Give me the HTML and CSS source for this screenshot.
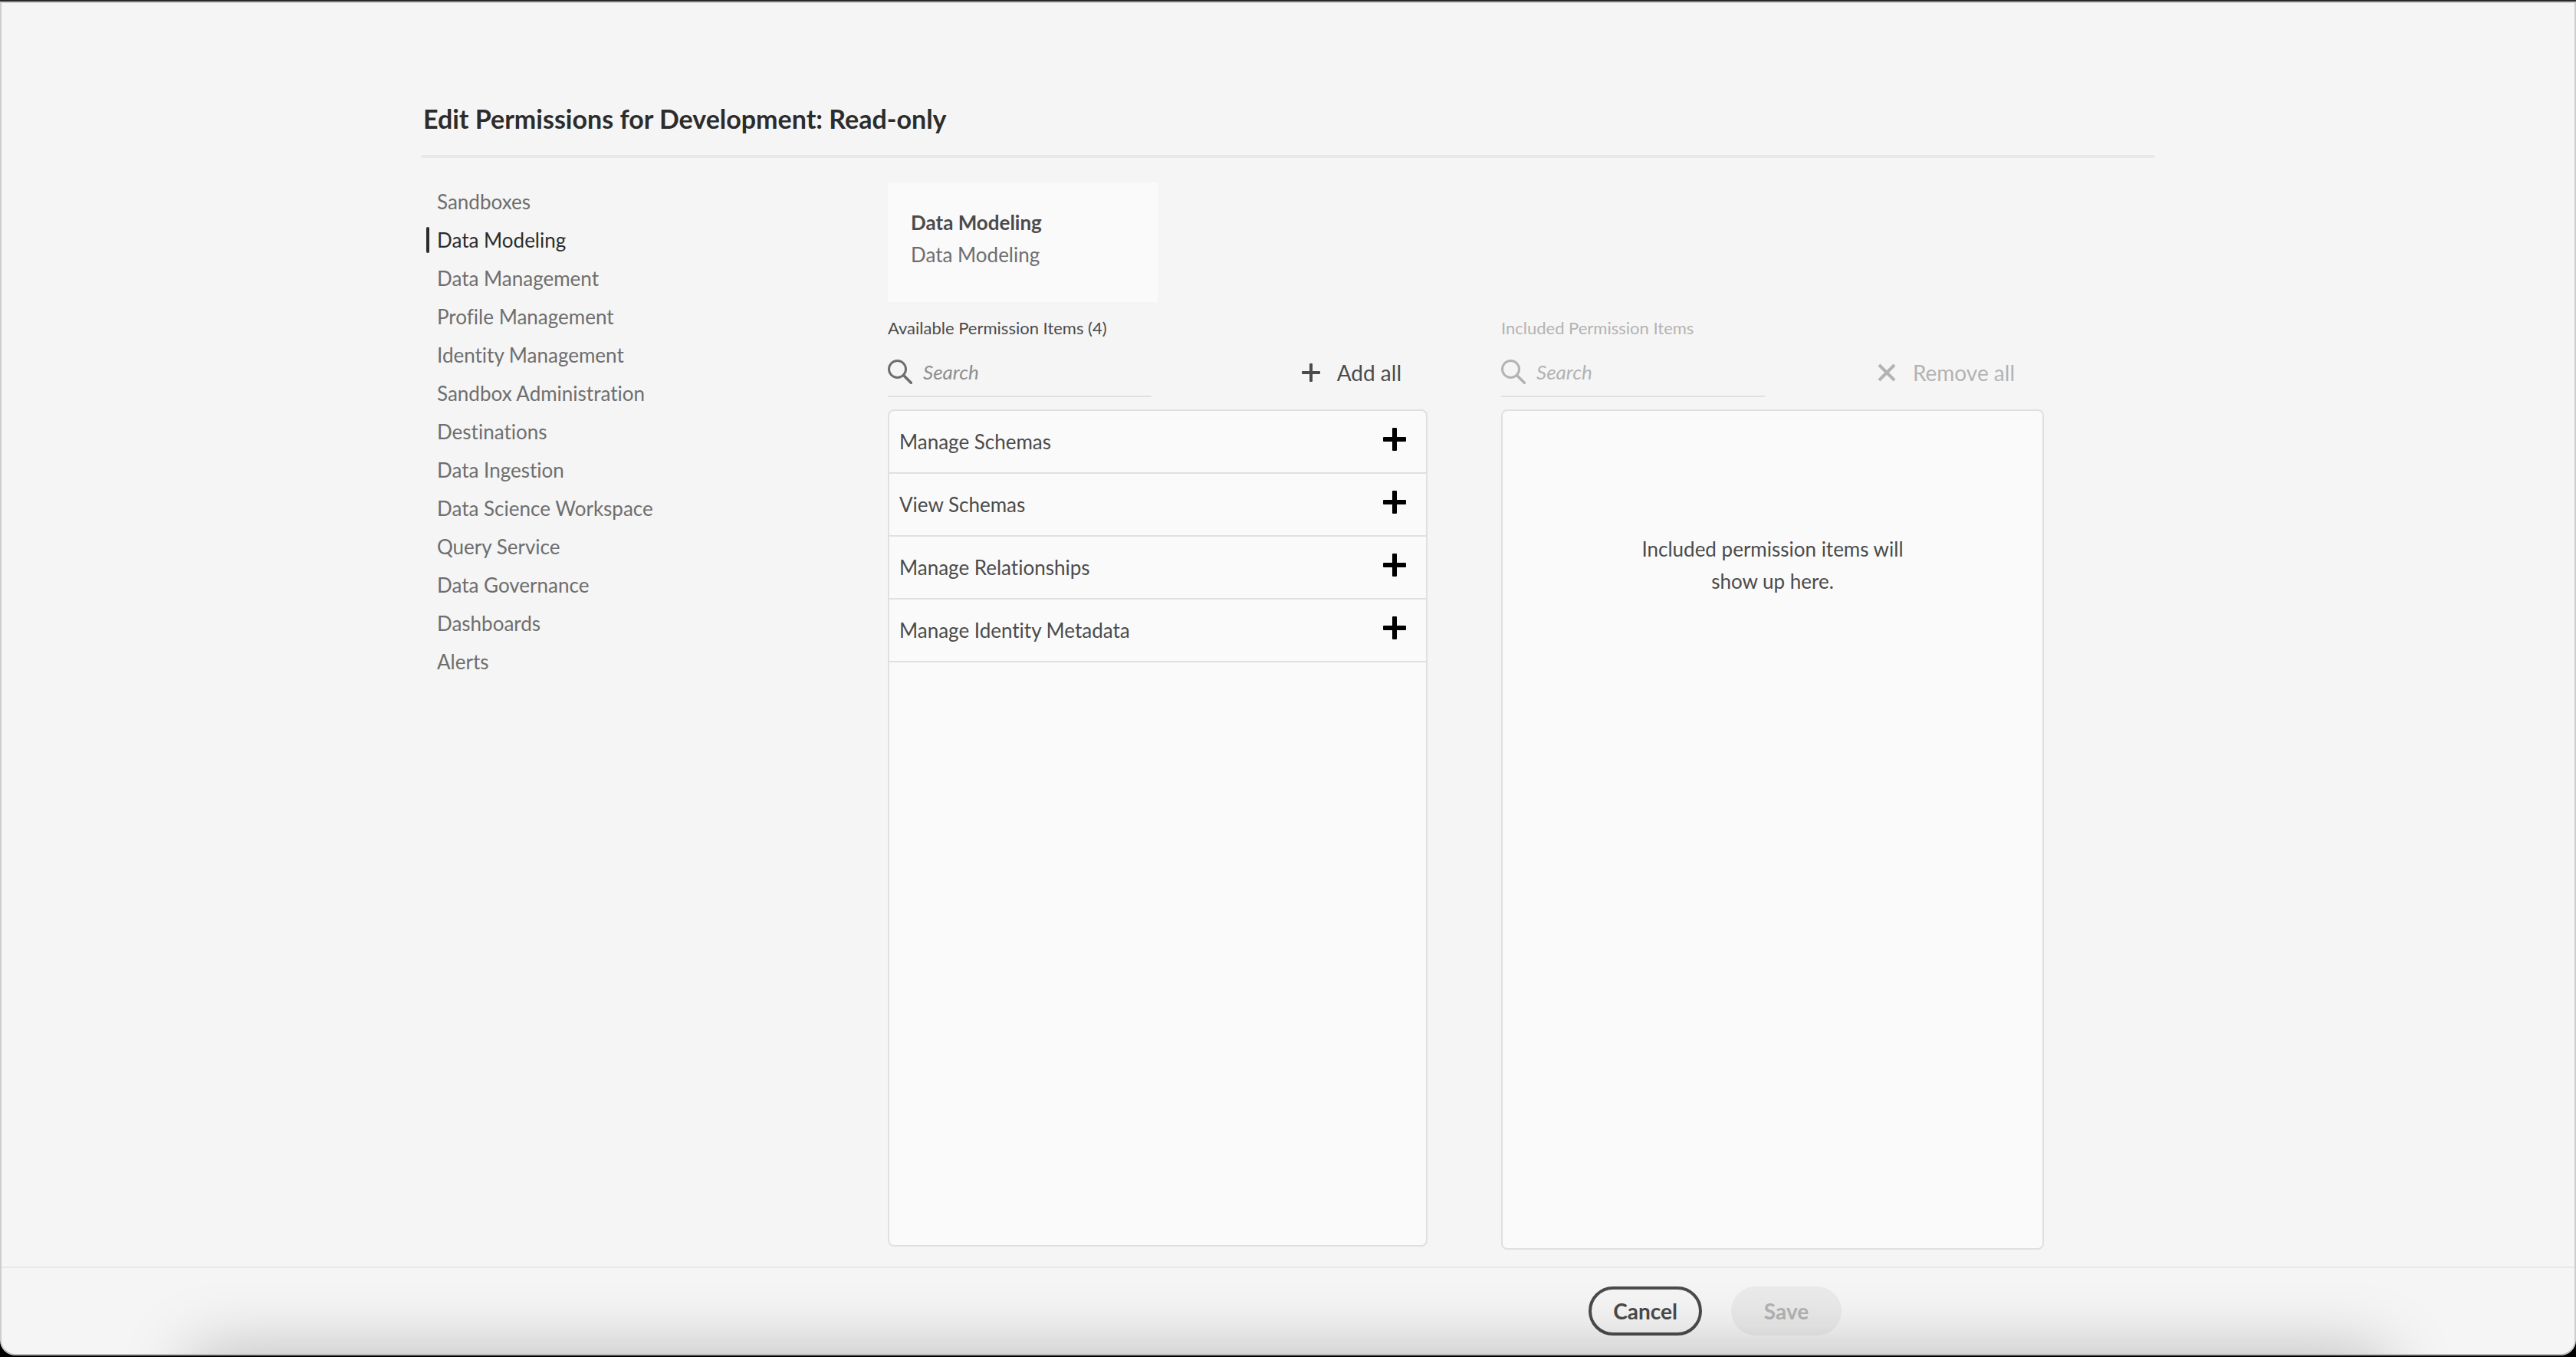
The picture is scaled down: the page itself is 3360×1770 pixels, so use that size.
FILE: index.html
```html
<!DOCTYPE html>
<html lang="en">
<head>
<meta charset="utf-8">
<meta name="viewport" content="width=device-width, initial-scale=1">
<title>Edit Permissions for Development: Read-only</title>
<link rel="stylesheet" href="styles.css">
</head>
<body>
<svg class="sprite" aria-hidden="true">
  <symbol id="icon-search" viewBox="0 0 32 32">
    <circle cx="12.5" cy="12.5" r="11" fill="none" stroke="currentColor" stroke-width="3"/>
    <path d="M20.5 20.5L30.3 30.3" fill="none" stroke="currentColor" stroke-width="3.6" stroke-linecap="round"/>
  </symbol>
  <symbol id="icon-add" viewBox="0 0 24 24">
    <path d="M11 0h2a1 1 0 0 1 1 1v9h9a1 1 0 0 1 1 1v2a1 1 0 0 1-1 1h-9v9a1 1 0 0 1-1 1h-2a1 1 0 0 1-1-1v-9H1a1 1 0 0 1-1-1v-2a1 1 0 0 1 1-1h9V1a1 1 0 0 1 1-1z" fill="currentColor"/>
  </symbol>
  <symbol id="icon-cross" viewBox="0 0 24 24">
    <path d="M2 2L22 22M22 2L2 22" fill="none" stroke="currentColor" stroke-width="4"/>
  </symbol>
  <symbol id="icon-add-bold" viewBox="0 0 30 30">
    <path d="M13 0h4a1 1 0 0 1 1 1v11h11a1 1 0 0 1 1 1v4a1 1 0 0 1-1 1H18v11a1 1 0 0 1-1 1h-4a1 1 0 0 1-1-1V18H1a1 1 0 0 1-1-1v-4a1 1 0 0 1 1-1h11V1a1 1 0 0 1 1-1z" fill="currentColor"/>
  </symbol>
</svg>

<div class="window">
  <main class="page">
    <header class="page-header">
      <h1 class="page-title">Edit Permissions for Development: Read-only</h1>
    </header>

    <div class="editor">
      <nav class="side-nav" aria-label="Permission categories">
        <a class="side-nav-item" href="#">Sandboxes</a>
        <a class="side-nav-item is-selected" href="#" aria-current="page">Data Modeling</a>
        <a class="side-nav-item" href="#">Data Management</a>
        <a class="side-nav-item" href="#">Profile Management</a>
        <a class="side-nav-item" href="#">Identity Management</a>
        <a class="side-nav-item" href="#">Sandbox Administration</a>
        <a class="side-nav-item" href="#">Destinations</a>
        <a class="side-nav-item" href="#">Data Ingestion</a>
        <a class="side-nav-item" href="#">Data Science Workspace</a>
        <a class="side-nav-item" href="#">Query Service</a>
        <a class="side-nav-item" href="#">Data Governance</a>
        <a class="side-nav-item" href="#">Dashboards</a>
        <a class="side-nav-item" href="#">Alerts</a>
      </nav>

      <div class="content">
        <section class="summary">
          <h2 class="summary-title">Data Modeling</h2>
          <p class="summary-text">Data Modeling</p>
        </section>

        <div class="columns">
          <section class="column column-available">
            <h3 class="column-label">Available Permission Items (4)</h3>
            <div class="toolbar">
              <label class="search">
                <svg class="icon-search"><use href="#icon-search"/></svg>
                <input class="search-input" type="text" placeholder="Search" aria-label="Search available items">
              </label>
              <button class="action" type="button">
                <svg class="icon-action"><use href="#icon-add"/></svg>
                Add all
              </button>
            </div>
            <ul class="list">
              <li class="row">Manage Schemas
                <button class="row-add" type="button" aria-label="Add Manage Schemas"><svg class="icon-row"><use href="#icon-add-bold"/></svg></button>
              </li>
              <li class="row">View Schemas
                <button class="row-add" type="button" aria-label="Add View Schemas"><svg class="icon-row"><use href="#icon-add-bold"/></svg></button>
              </li>
              <li class="row">Manage Relationships
                <button class="row-add" type="button" aria-label="Add Manage Relationships"><svg class="icon-row"><use href="#icon-add-bold"/></svg></button>
              </li>
              <li class="row">Manage Identity Metadata
                <button class="row-add" type="button" aria-label="Add Manage Identity Metadata"><svg class="icon-row"><use href="#icon-add-bold"/></svg></button>
              </li>
            </ul>
          </section>

          <section class="column column-included">
            <h3 class="column-label">Included Permission Items</h3>
            <div class="toolbar">
              <label class="search">
                <svg class="icon-search"><use href="#icon-search"/></svg>
                <input class="search-input" type="text" placeholder="Search" aria-label="Search included items" disabled>
              </label>
              <button class="action" type="button" disabled>
                <svg class="icon-action"><use href="#icon-cross"/></svg>
                Remove all
              </button>
            </div>
            <div class="list">
              <p class="empty-message">Included permission items will show up here.</p>
            </div>
          </section>
        </div>
      </div>
    </div>
  </main>

  <footer class="footer">
    <div class="footer-actions">
      <button class="button button-cancel" type="button">Cancel</button>
      <button class="button button-save" type="button" disabled>Save</button>
    </div>
  </footer>
</div>
</body>
</html>
```
FILE: styles.css
```css
:root {
  --page-width: 2260px;
  --bg: #f5f5f5;
  --surface: #fafafa;
  --divider: #e8e8e8;
  --border: #e0e0e0;
  --text: #4b4b4b;
  --text-strong: #2c2c2c;
  --text-muted: #6e6e6e;
  --text-disabled: #b3b3b3;
}

* {
  box-sizing: border-box;
}

body {
  margin: 0;
  min-height: 100vh;
  display: flex;
  flex-direction: column;
  background: #000;
  border-top: 2px solid #2a2a2a;
  border-bottom: 2px solid #000;
  color: var(--text);
  font-family: Lato, "Open Sans", sans-serif;
  font-size: 26px;
  line-height: 42px;
  font-variant-ligatures: none;
}

h1, h2, h3, p, ul {
  margin: 0;
  padding: 0;
}

button, input {
  margin: 0;
  padding: 0;
  border: 0;
  background: none;
  font: inherit;
  font-variant-ligatures: none;
  color: inherit;
}

.sprite {
  position: absolute;
  width: 0;
  height: 0;
}

.window {
  position: relative;
  flex: 1;
  display: flex;
  flex-direction: column;
  overflow: hidden;
  background: var(--bg);
  border: 2px solid #cecece;
  border-bottom-color: #bbb;
  border-radius: 0 0 20px 20px;
}

/* shade rising from the lower edge of the window */
.window::after {
  content: "";
  position: absolute;
  left: 248px;
  right: 248px;
  bottom: -100px;
  height: 100px;
  box-shadow: 0 0 90px rgba(0, 0, 0, 0.25);
  pointer-events: none;
}

.page {
  flex: 1;
  display: flex;
  flex-direction: column;
  width: 100%;
  max-width: var(--page-width);
  margin: 0 auto;
}

.page-header {
  padding: 129px 2px 25px;
  border-bottom: 4px solid var(--divider);
}

.page-title {
  color: var(--text-strong);
  font-size: 34px;
  line-height: 44px;
}

.editor {
  flex: 1;
  display: grid;
  grid-template-columns: minmax(320px, 608px) minmax(0, 1fr);
  padding: 32px 0 22px;
}

.side-nav {
  display: flex;
  flex-direction: column;
}

.side-nav-item {
  position: relative;
  padding-left: 20px;
  line-height: 50px;
  color: var(--text-muted);
  text-decoration: none;
}

.side-nav-item.is-selected {
  color: var(--text-strong);
}

.side-nav-item.is-selected::before {
  content: "";
  position: absolute;
  left: 6px;
  top: 8px;
  bottom: 8px;
  width: 4px;
  border-radius: 2px;
  background: var(--text-strong);
}

.content {
  display: flex;
  flex-direction: column;
  gap: 18px;
}

.summary {
  width: 352px;
  min-height: 156px;
  padding: 31px 30px;
  background: var(--surface);
}

.summary-title {
  font-size: 26px;
  line-height: 42px;
}

.summary-text {
  color: var(--text-muted);
}

.columns {
  flex: 1;
  display: grid;
  grid-template-columns: minmax(0, 704px) minmax(0, 708px);
  gap: 96px;
}

.column {
  display: flex;
  flex-direction: column;
}

.column-available {
  padding-bottom: 4px;
}

.column-included .column-label {
  color: var(--text-disabled);
}

.column-label {
  margin-bottom: 10px;
  font-size: 22px;
  font-weight: 400;
  line-height: 32px;
}

.toolbar {
  display: flex;
  align-items: center;
  justify-content: space-between;
  max-width: 704px;
  margin-bottom: 16px;
}

.search {
  display: flex;
  align-items: center;
  gap: 14px;
  width: 344px;
  height: 64px;
  border-bottom: 2px solid var(--border);
  color: var(--text-muted);
}

.search:has(:disabled) {
  color: var(--text-disabled);
}

.search-input {
  flex: 1;
  min-width: 0;
  font-style: italic;
}

.search-input::placeholder {
  color: #8e8e8e;
  opacity: 1;
}

.search-input:disabled::placeholder {
  color: var(--text-disabled);
}

.icon-search {
  width: 32px;
  height: 32px;
}

.action {
  display: flex;
  align-items: center;
  gap: 22px;
  padding-right: 34px;
  font-size: 28px;
}

.action:disabled {
  color: var(--text-disabled);
}

.icon-action {
  width: 24px;
  height: 24px;
}

.list {
  flex: 1;
  list-style: none;
  background: var(--surface);
  border: 2px solid var(--border);
  border-radius: 8px;
}

.row {
  display: flex;
  align-items: center;
  justify-content: space-between;
  min-height: 82px;
  padding: 0 26px 0 13px;
  border-bottom: 2px solid var(--border);
}

.row-add {
  display: flex;
  padding-bottom: 6px;
  color: #000;
}

.icon-row {
  width: 30px;
  height: 30px;
}

.empty-message {
  max-width: 380px;
  margin: 0 auto;
  padding-top: 159px;
  text-align: center;
}

.footer {
  border-top: 2px solid var(--divider);
}

.footer-actions {
  display: flex;
  justify-content: flex-end;
  gap: 38px;
  max-width: var(--page-width);
  margin: 0 auto;
  padding: 24px 408px 24px 0;
}

.button {
  height: 64px;
  border-radius: 32px;
  font-size: 28px;
  font-weight: 700;
}

.button-cancel {
  width: 148px;
  border: 4px solid var(--text);
}

.button-save {
  width: 144px;
  background: #eaeaea;
  color: var(--text-disabled);
}
```
